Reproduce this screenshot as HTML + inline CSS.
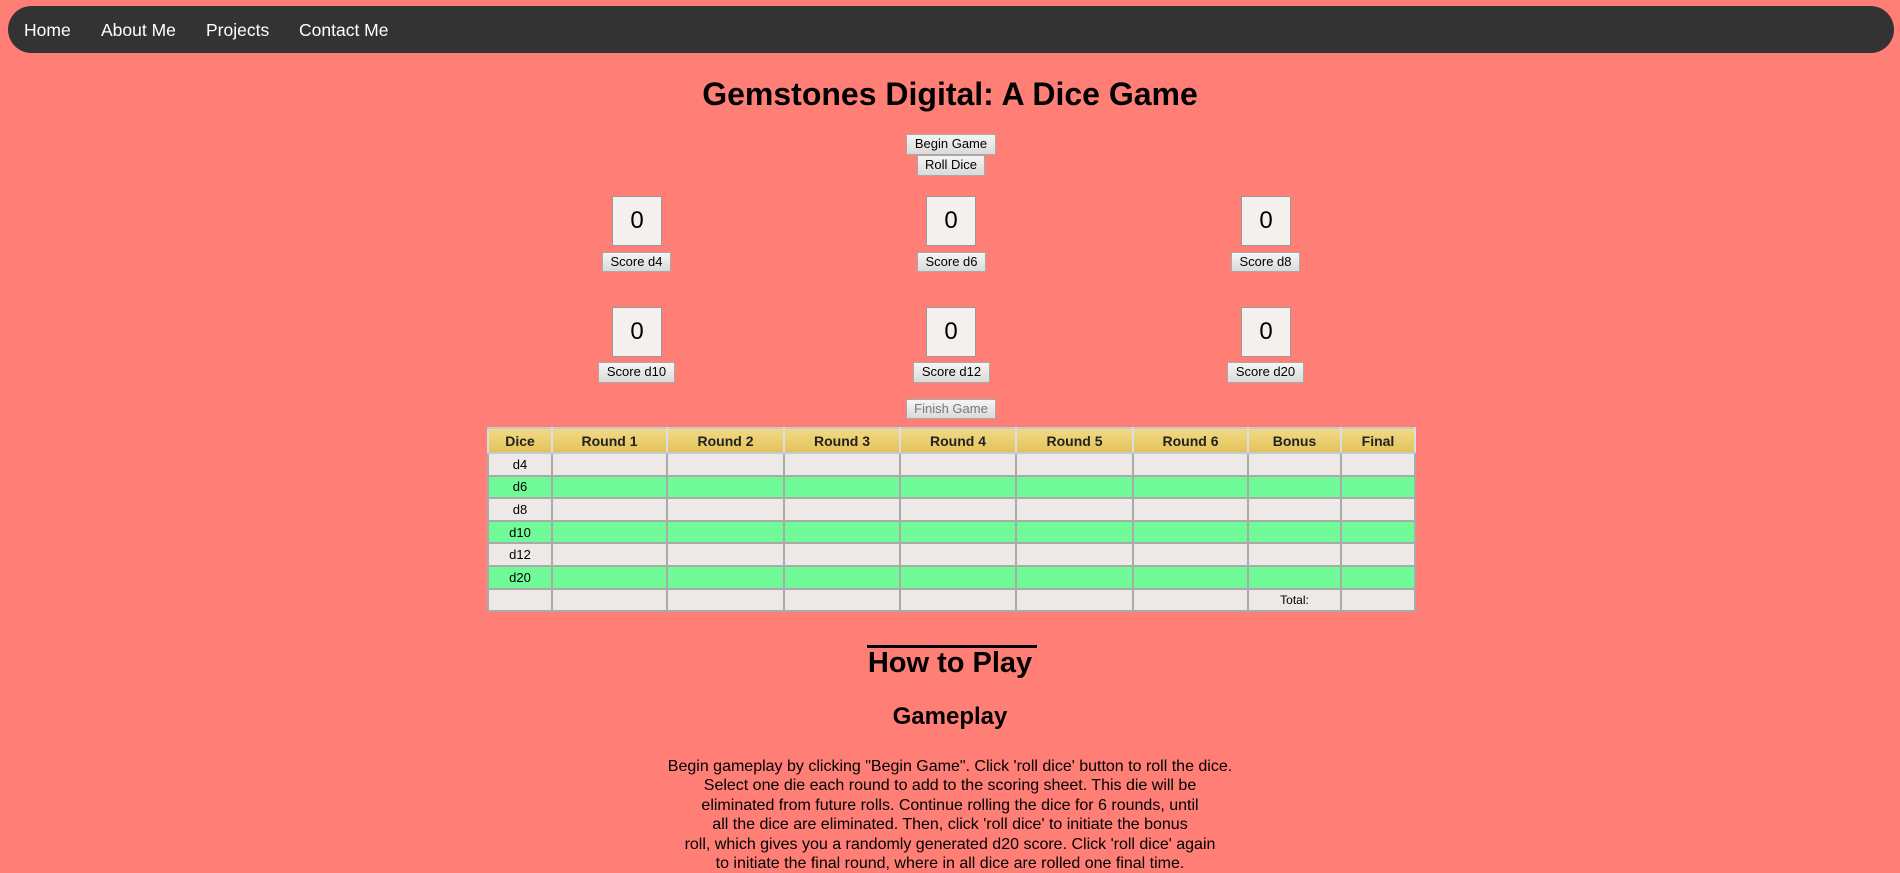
<!DOCTYPE html>
<html><head><meta charset="utf-8"><style>
*{box-sizing:border-box}
body{margin:0;width:1900px;height:850px;overflow:hidden;background:#ff7f77;font-family:"Liberation Sans",Arial,sans-serif;position:relative}
.nav{position:absolute;left:8px;top:6px;width:1886px;height:47px;background:#333;border-radius:24px}
.nav a{position:absolute;top:14px;color:#fff;font-size:17.5px;text-decoration:none}
.abs{position:absolute}
h1{position:absolute;left:0;width:1900px;top:75px;margin:0;text-align:center;font-size:32px;line-height:38px}
.btn{position:absolute;background:linear-gradient(#f6f5f4,#dcdad8);border:1px solid #a9a9a9;font-size:13px;text-align:center;color:#000;line-height:18px}
.box{position:absolute;width:50px;height:50px;background:#f4f0ee;border:1px solid #999;font-size:24px;text-align:center;line-height:48px}
table{position:absolute;left:487px;top:427px;border-collapse:collapse;font-size:13px}
td,th{border:2px solid #aaa;height:23px;padding:0;text-align:center}
td{height:22.6px}
th{background:linear-gradient(#f1d985,#e4c35c);border-color:#c5c9d6 #d8dde6;height:25px;font-size:14px;color:#222}
tr.g td{background:#70fa98}
tr.w td{background:#ede9e6}
.ht{position:absolute;left:0;width:1900px;text-align:center;margin:0}
</style></head><body>
<div class="nav">
<a style="left:16px">Home</a><a style="left:93px">About Me</a><a style="left:198px">Projects</a><a style="left:291px">Contact Me</a>
</div>
<h1>Gemstones Digital: A Dice Game</h1>
<div class="btn" style="left:906px;top:134px;width:90px;height:21px">Begin Game</div>
<div class="btn" style="left:917px;top:155px;width:68px;height:21px">Roll Dice</div>

<div class="box" style="left:612px;top:196px">0</div>
<div class="box" style="left:926px;top:196px">0</div>
<div class="box" style="left:1241px;top:196px">0</div>
<div class="btn" style="left:602px;top:252px;width:69px;height:20px">Score d4</div>
<div class="btn" style="left:917px;top:252px;width:69px;height:20px">Score d6</div>
<div class="btn" style="left:1231px;top:252px;width:69px;height:20px">Score d8</div>

<div class="box" style="left:612px;top:307px">0</div>
<div class="box" style="left:926px;top:307px">0</div>
<div class="box" style="left:1241px;top:307px">0</div>
<div class="btn" style="left:598px;top:362px;width:77px;height:21px">Score d10</div>
<div class="btn" style="left:913px;top:362px;width:77px;height:21px">Score d12</div>
<div class="btn" style="left:1227px;top:362px;width:77px;height:21px">Score d20</div>

<div class="btn" style="left:906px;top:399px;width:90px;height:20px;color:#777">Finish Game</div>

<table>
<tr><th style="width:64px">Dice</th><th style="width:115px">Round 1</th><th style="width:117px">Round 2</th><th style="width:116px">Round 3</th><th style="width:116px">Round 4</th><th style="width:117px">Round 5</th><th style="width:115px">Round 6</th><th style="width:93px">Bonus</th><th style="width:74px">Final</th></tr>
<tr class="w"><td>d4</td><td></td><td></td><td></td><td></td><td></td><td></td><td></td><td></td></tr>
<tr class="g"><td>d6</td><td></td><td></td><td></td><td></td><td></td><td></td><td></td><td></td></tr>
<tr class="w"><td>d8</td><td></td><td></td><td></td><td></td><td></td><td></td><td></td><td></td></tr>
<tr class="g"><td>d10</td><td></td><td></td><td></td><td></td><td></td><td></td><td></td><td></td></tr>
<tr class="w"><td>d12</td><td></td><td></td><td></td><td></td><td></td><td></td><td></td><td></td></tr>
<tr class="g"><td>d20</td><td></td><td></td><td></td><td></td><td></td><td></td><td></td><td></td></tr>
<tr class="w"><td></td><td></td><td></td><td></td><td></td><td></td><td></td><td style="font-size:12px">Total:</td><td></td></tr>
</table>

<div class="abs" style="left:867px;top:645px;width:170px;height:3px;background:#000"></div>
<h2 class="ht" style="top:646px;font-size:29px;line-height:34px">How to Play</h2>
<h3 class="ht" style="top:703px;font-size:24px;line-height:28px">Gameplay</h3>
<p class="ht" style="top:757px;font-size:16px;line-height:19.4px">Begin gameplay by clicking "Begin Game". Click 'roll dice' button to roll the dice.<br>Select one die each round to add to the scoring sheet. This die will be<br>eliminated from future rolls. Continue rolling the dice for 6 rounds, until<br>all the dice are eliminated. Then, click 'roll dice' to initiate the bonus<br>roll, which gives you a randomly generated d20 score. Click 'roll dice' again<br>to initiate the final round, where in all dice are rolled one final time.</p>
</body></html>
